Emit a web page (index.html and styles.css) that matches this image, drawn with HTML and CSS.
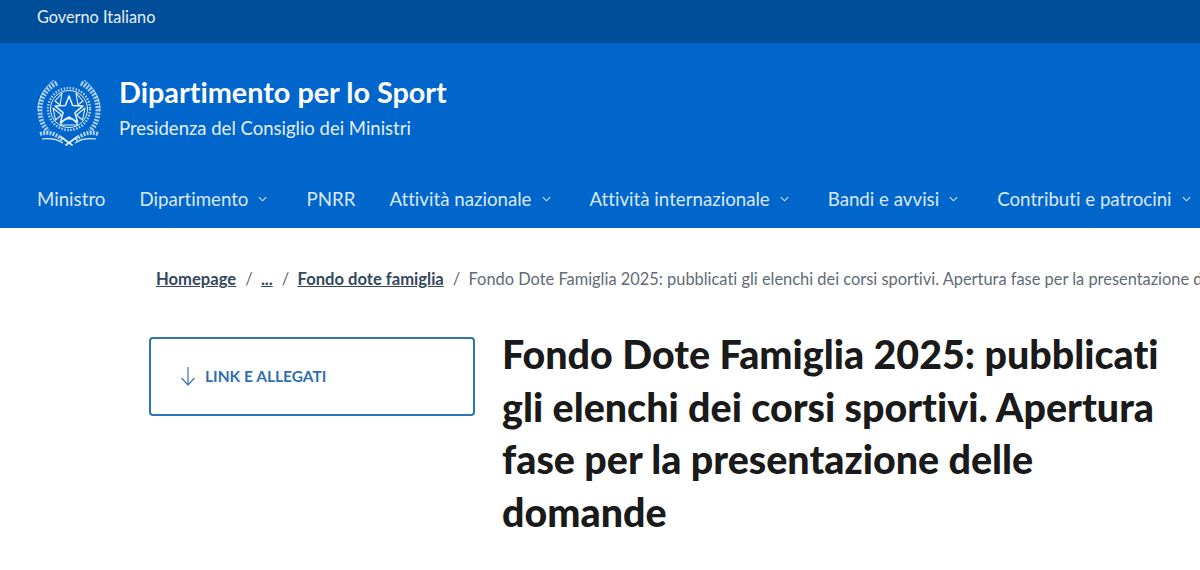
FILE: index.html
```html
<!DOCTYPE html>
<html lang="it">
<head>
    <meta charset="UTF-8">
    <meta name="viewport" content="width=device-width, initial-scale=1.0">
    <title>Fondo Dote Famiglia 2025</title>
    <link rel="stylesheet" href="styles.css">
</head>
<body>
    <div class="slim-header"><a href="#">Governo Italiano</a></div>

    <header class="main-header">
        <div class="brand">
            <svg class="emblem" viewBox="0 0 64 68" fill="none" stroke="#e6f0fb">
                <!-- corona: foglie fatte con tratteggio spesso -->
                <path d="M20 5C8 11 3 21 3 32c0 9 3 16 8 21" stroke-width="5" stroke-dasharray="2 1.300" opacity=".75"/>
                <path d="M44 5c12 6 17 16 17 27 0 9-3 16-8 21" stroke-width="5" stroke-dasharray="2 1.300" opacity=".75"/>
                <path d="M17 2C9 8 1 18 1 32M47 2c8 6 16 16 16 30" stroke-width=".8"/>
                <circle cx="32" cy="31" r="21" stroke-width="2.400" stroke-dasharray="1.500 1.500" opacity=".8"/>
                <circle cx="32" cy="31" r="18.500" stroke-width="1"/>
                <path d="M25 15l-7 8 5 4zM39 15l7 8-5 4zM16 30l2.500 12 6-5zM48 30l-2.500 12-6-5zM23 47h18l-5-6h-8z" stroke-width="1.100" stroke-linejoin="round"/>
                <path d="M32 18l3.600 9.600 10.300.5-8 6.500 2.700 9.900L32 39l-8.600 5.500 2.700-9.900-8-6.500 10.300-.5z" stroke-width="1.500" stroke-linejoin="round"/>
                <!-- nastro -->
                <path d="M3 56c9-3 16 0 23 6M61 56c-9-3-16 0-23 6" stroke-width="4" stroke-dasharray="2 1.200" opacity=".8"/>
                <path d="M5 61c8-1 15 0 21 4M59 61c-8-1-15 0-21 4" stroke-width="1.100"/>
                <path d="M24 59l11 8M40 59l-11 8" stroke-width="1.800" stroke-linecap="round"/>
            </svg>
            <div class="brand-text">
                <div class="brand-title">Dipartimento per lo Sport</div>
                <div class="brand-sub">Presidenza del Consiglio dei Ministri</div>
            </div>
        </div>

        <nav class="main-nav">
            <a href="#">Ministro</a>
            <a href="#">Dipartimento
                <svg class="chev" viewBox="0 0 10 6"><path d="M1 1l4 4 4-4"/></svg></a>
            <a href="#">PNRR</a>
            <a href="#">Attività nazionale
                <svg class="chev" viewBox="0 0 10 6"><path d="M1 1l4 4 4-4"/></svg></a>
            <a href="#">Attività internazionale
                <svg class="chev" viewBox="0 0 10 6"><path d="M1 1l4 4 4-4"/></svg></a>
            <a href="#">Bandi e avvisi
                <svg class="chev" viewBox="0 0 10 6"><path d="M1 1l4 4 4-4"/></svg></a>
            <a href="#">Contributi e patrocini
                <svg class="chev" viewBox="0 0 10 6"><path d="M1 1l4 4 4-4"/></svg></a>
        </nav>
    </header>

    <main class="content">
        <div class="breadcrumb">
            <a href="#">Homepage</a><span class="sep">/</span>
            <a href="#">...</a><span class="sep">/</span>
            <a href="#">Fondo dote famiglia</a><span class="sep">/</span>
            <span class="current">Fondo Dote Famiglia 2025: pubblicati gli elenchi dei corsi sportivi. Apertura fase per la presentazione delle domande</span>
        </div>

        <div class="article">
            <aside class="toc">
                <a href="#" class="toc-box">
                    <svg class="arrow" viewBox="0 0 16 20"><path d="M8 1v18M1.500 12l6.500 7 6.500-7"/></svg>
                    <span>LINK E ALLEGATI</span>
                </a>
            </aside>
            <h1>Fondo Dote Famiglia 2025: pubblicati gli elenchi dei corsi sportivi. Apertura fase per la presentazione delle domande</h1>
        </div>
    </main>
</body>
</html>
```

FILE: styles.css
```css
html, body {
    margin: 0;
    padding: 0;
    height: 570px;
    overflow: hidden;
}

body {
    font-family: 'Lato', 'Noto Sans', sans-serif;
    font-variant-ligatures: none;
    background-color: #ffffff;
    color: #1a1a1a;
}

a {
    color: inherit;
    text-decoration: none;
}

.slim-header {
    height: 43px;
    box-sizing: border-box;
    padding: 8px 37px 0;
    background-color: #004d99;
    color: #e8f0f8;
    font-size: 16.300px;
    line-height: 18px;
}

.main-header {
    height: 185px;
    box-sizing: border-box;
    padding: 35px 0 0 37px;
    background-color: #0066cc;
    color: #ffffff;
}

.brand {
    display: flex;
    align-items: center;
    gap: 18px;
    height: 68px;
}

.emblem {
    width: 64px;
    height: 68px;
    flex: none;
}

.brand-text {
    padding-bottom: 10px;
}

.brand-title {
    font-size: 28.800px;
    font-weight: 700;
    line-height: 36px;
}

.brand-sub {
    margin-top: 6px;
    font-size: 18.500px;
    line-height: 24px;
    color: #e3eefa;
}

.main-nav {
    display: flex;
    margin-top: 41px;
    font-size: 18.700px;
    line-height: 24px;
    color: #d9e8f8;
    white-space: nowrap;
}

.main-nav a {
    display: flex;
    align-items: center;
    margin-right: 34px;
}

.chev {
    width: 9px;
    height: 6px;
    margin: 0 5px 0 10px;
    fill: none;
    stroke: #d9e8f8;
    stroke-width: 1.200;
}

.content {
    padding: 41px 0 0 149px;
}

.breadcrumb {
    padding-left: 7px;
    font-size: 16.600px;
    line-height: 20px;
    white-space: nowrap;
    overflow: hidden;
    color: #5f6b76;
}

.breadcrumb a {
    color: #33485c;
    font-weight: 700;
    text-decoration: underline;
}

.current {
    font-size: 16.400px;
}

.sep {
    margin: 0 4px 0 9px;
    color: #5f6b76;
}

.article {
    display: flex;
    margin-top: 48px;
}

.toc {
    width: 326px;
    flex: none;
}

.toc-box {
    display: flex;
    align-items: center;
    height: 79px;
    box-sizing: border-box;
    padding: 0 0 2px 29px;
    border: 2px solid #2f74b8;
    border-radius: 4px;
    color: #2f6fb0;
    font-size: 15.500px;
    font-weight: 700;
}

.arrow {
    width: 16px;
    height: 20px;
    margin-right: 9px;
    fill: none;
    stroke: #3f78b2;
    stroke-width: 1.200;
}

h1 {
    width: 670px;
    margin: -9px 0 0 27px;
    font-size: 39.400px;
    font-weight: 900;
    line-height: 52.500px;
    color: #1a1a1a;
}
```
